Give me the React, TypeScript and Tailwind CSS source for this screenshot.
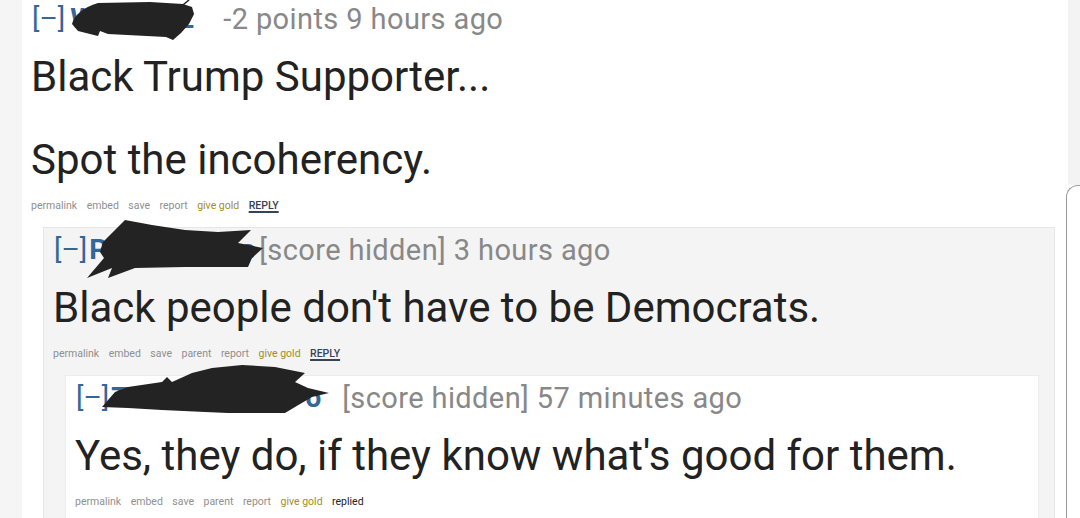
import React from "react";

type Blob = { left: number; top: number; w: number; h: number; box: string; d: string; line?: string };

type Comment = {
  nameW: number;
  nameMl: number;
  scoreMl: number;
  first: string;
  last: string;
  score: string;
  paras: string[];
  actions: string[];
  tail: "reply" | "replied";
  blob: Blob;
};

const blobs: Blob[] = [
  {
    left: 41,
    top: 0,
    w: 124,
    h: 42,
    box: "72 0 124 42",
    d: "M72,24 C74,15 84,7 98,3 L150,2 L183,4 L192,7 L194,14 L189,24 L181,33 L173,40 L166,37 L108,34 L100,31 L98,36 L78,31 Z",
    line: "M178,9 L189,0",
  },
  {
    left: 33,
    top: -13,
    w: 180,
    h: 62,
    box: "86 218 180 62",
    d: "M125,220 L152,225 L185,230 L218,232 L251,230 L238,243 L263,248 L252,258 L248,267 L185,267 L135,268 L108,278 L112,268 L87,278 L104,258 L100,252 L103,242 Z",
  },
  {
    left: 25,
    top: -16,
    w: 230,
    h: 52,
    box: "100 363 230 52",
    d: "M102,407 L115,392 L128,387 L162,382 L167,377 L172,382 L192,373 L212,368 L242,365 L275,367 L305,373 L295,382 L308,388 L329,393 L312,397 L295,407 L285,413 L228,413 L205,412 L162,410 L128,408 Z",
  },
];

const comments: Comment[] = [
  {
    nameW: 124,
    nameMl: 5,
    scoreMl: 29,
    first: "W",
    last: "z",
    score: "-2 points 9 hours ago",
    paras: ["Black Trump Supporter...", "Spot the incoherency."],
    actions: ["permalink", "embed", "save", "report"],
    tail: "reply",
    blob: blobs[0],
  },
  {
    nameW: 166,
    nameMl: 2,
    scoreMl: 4,
    first: "P",
    last: "s",
    score: "[score hidden] 3 hours ago",
    paras: ["Black people don't have to be Democrats."],
    actions: ["permalink", "embed", "save", "parent", "report"],
    tail: "reply",
    blob: blobs[1],
  },
  {
    nameW: 210,
    nameMl: 2,
    scoreMl: 21,
    first: "T",
    last: "o",
    score: "[score hidden] 57 minutes ago",
    paras: ["Yes, they do, if they know what's good for them."],
    actions: ["permalink", "embed", "save", "parent", "report"],
    tail: "replied",
    blob: blobs[2],
  },
];

function CommentBody({ c, children }: { c: Comment; children?: React.ReactNode }) {
  return (
    <div>
      {/* tagline */}
      <div className="relative flex items-center h-[38px] text-[28px] leading-[38px] whitespace-nowrap">
        <span className="ml-px text-[#369]">[–]</span>
        <span
          className="inline-flex justify-between font-bold text-[#369]"
          style={{ width: c.nameW, marginLeft: c.nameMl }}
        >
          <span>{c.first}</span>
          <span>{c.last}</span>
        </span>
        <span className="text-[29px] tracking-[0.4px] text-[#888]" style={{ marginLeft: c.scoreMl }}>
          {c.score}
        </span>
        {/* redaction scribble */}
        <svg
          className="absolute"
          style={{ left: c.blob.left, top: c.blob.top }}
          width={c.blob.w}
          height={c.blob.h}
          viewBox={c.blob.box}
        >
          <path d={c.blob.d} fill="#232323" />
          {c.blob.line && <path d={c.blob.line} stroke="#232323" strokeWidth="1.5" fill="none" />}
        </svg>
      </div>

      {/* body */}
      <div className="mt-[15px] flex flex-col gap-[35px] text-[42px] leading-[48px] text-[#222] whitespace-nowrap">
        {c.paras.map((p) => (
          <p key={p}>{p}</p>
        ))}
      </div>

      {/* buttons */}
      <div className="mt-[15px] flex items-center gap-[9.5px] h-[14px] text-[10.5px] leading-[14px] whitespace-nowrap">
        {c.actions.map((a) => (
          <span key={a} className="text-[#8f8f8f]">
            {a}
          </span>
        ))}
        <span className="text-[#a38d1f]">give gold</span>
        {c.tail === "reply" ? (
          <span className="font-medium text-[#334455] underline decoration-[1.5px] underline-offset-2">REPLY</span>
        ) : (
          <span className="text-[#222]">replied</span>
        )}
      </div>

      {children}
    </div>
  );
}

export default function App() {
  return (
    <div className="flex h-[518px] w-[1080px] overflow-hidden bg-white" style={{ fontFamily: "Roboto, 'Noto Sans', sans-serif" }}>
      <div className="w-[22px] shrink-0 bg-[#f5f5f5]" />

      <main className="flex-1 min-w-0 pl-[9px] pr-[13px]">
        <CommentBody c={comments[0]}>
          <div className="mt-[14px] ml-[12px] border border-[#e6e6e6] bg-[#f4f4f4] pt-[3px] pl-[9px] pr-[15px]">
            <CommentBody c={comments[1]}>
              <div className="mt-[14px] ml-[12px] border border-[#ececec] bg-white pt-[3px] pl-[9px] pb-6">
                <CommentBody c={comments[2]} />
              </div>
            </CommentBody>
          </div>
        </CommentBody>
      </main>

      {/* edge of an overlay panel */}
      <div className="w-[14px] shrink-0 flex flex-col -ml-[2px]">
        <div className="h-[185px] border-l-2 border-white bg-[#f3f3f3]" />
        <div className="flex-1 rounded-tl-[12px] border-l border-t border-[#9a9a9a] bg-white" />
      </div>
    </div>
  );
}
